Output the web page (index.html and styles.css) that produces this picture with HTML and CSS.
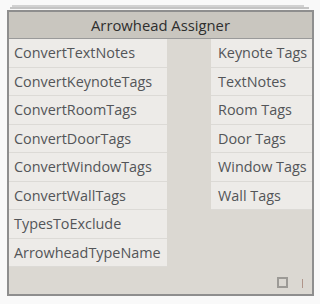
FILE: index.html
```html
<!DOCTYPE html>
<html lang="en">

<head>
  <meta charset="UTF-8">
  <meta name="viewport" content="width=device-width, initial-scale=1.0">
  <title>Arrowhead Assigner</title>
  <link rel="stylesheet" href="styles.css">
</head>

<body>
  <div class="node">
    <div class="node-header">Arrowhead Assigner</div>
    <div class="node-body">
      <ul class="ports ports-in">
        <li>ConvertTextNotes</li>
        <li>ConvertKeynoteTags</li>
        <li>ConvertRoomTags</li>
        <li>ConvertDoorTags</li>
        <li>ConvertWindowTags</li>
        <li>ConvertWallTags</li>
        <li>TypesToExclude</li>
        <li>ArrowheadTypeName</li>
      </ul>
      <ul class="ports ports-out">
        <li>Keynote Tags</li>
        <li>TextNotes</li>
        <li>Room Tags</li>
        <li>Door Tags</li>
        <li>Window Tags</li>
        <li>Wall Tags</li>
      </ul>
    </div>
    <div class="node-footer">
      <span class="preview-toggle"></span>
      <span class="lacing"></span>
    </div>
  </div>
</body>

</html>
```

FILE: styles.css
```css
* {
  box-sizing: border-box;
}

body {
  margin: 0;
  background-color: #f9f9f9;
  font-family: "Open Sans", sans-serif;
}

.node {
  position: relative;
  width: 307px;
  margin: 10px 0 0 7px;
  border: 2px solid #8e8e8e;
  background-color: #dbd8d2;
}

/* stacked copies peeking out above the node */
.node::before,
.node::after {
  content: "";
  position: absolute;
  height: 2px;
  background-color: #d2d2d2;
}

.node::before {
  top: -7px;
  left: 3px;
  right: 8px;
}

.node::after {
  top: -5px;
  left: 1px;
  right: 3px;
  background-color: #c4c4c4;
}

.node-header {
  height: 27px;
  line-height: 26px;
  text-align: center;
  font-size: 14.8px;
  font-weight: 500;
  color: #2e2e2e;
  background-color: #c9c6bf;
  border-bottom: 1px solid #9a9a9a;
}

.node-body {
  display: flex;
  justify-content: space-between;
  align-items: flex-start;
}

.ports {
  list-style: none;
  margin: 0;
  padding: 0;
}

.ports li {
  height: 28.5px;
  line-height: 28.5px;
  padding-left: 5px;
  font-size: 14.4px;
  color: #535558;
  background-color: #edebe8;
  border-bottom: 1px solid #dcdad6;
}

.ports-in {
  width: 158px;
}

.ports-out {
  width: 101px;
}

.ports-out li {
  padding-left: 7px;
}

.node-footer {
  display: flex;
  justify-content: flex-end;
  align-items: flex-start;
  gap: 14px;
  height: 27px;
  padding: 10px 9px 0 0;
}

.preview-toggle {
  width: 11px;
  height: 11px;
  border: 2px solid #9c9a96;
}

.lacing {
  width: 1px;
  height: 9px;
  margin-top: 2px;
  background-color: #b0958a;
}
```
